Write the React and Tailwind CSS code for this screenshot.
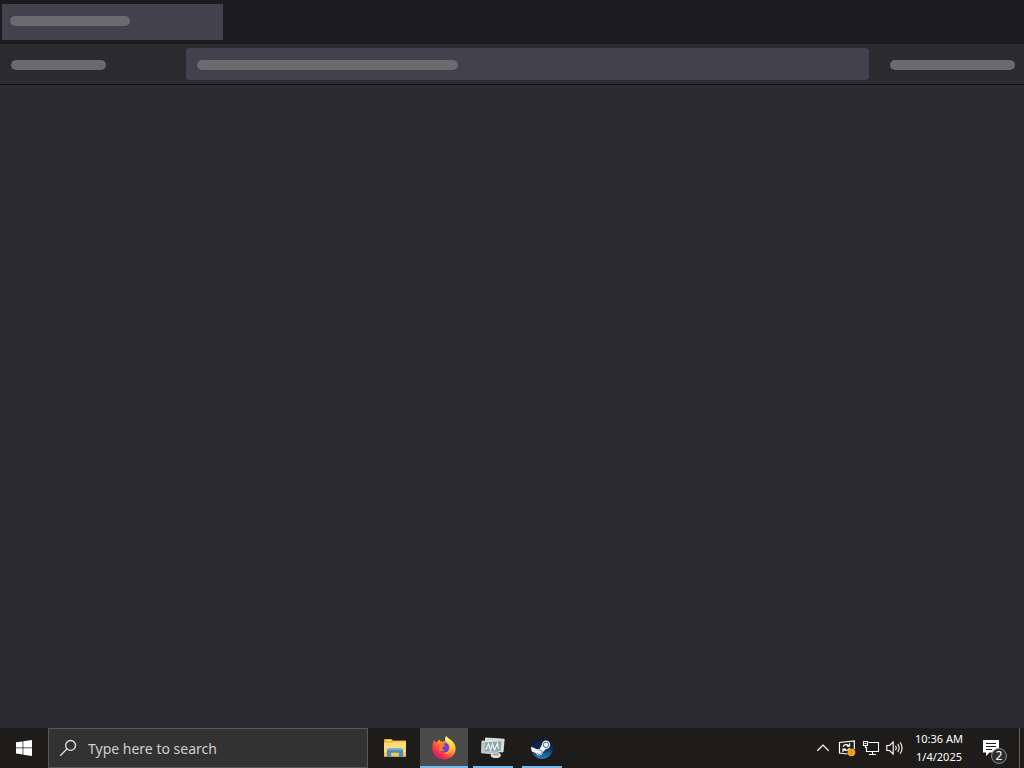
import React from "react";

function Skeleton({ className }) {
  return <div aria-hidden="true" className={`h-2.5 rounded-[5px] bg-[#6b6a6e] ${className}`} />;
}

function WindowsLogo() {
  return (
    <svg viewBox="0 0 16 16" className="size-4" fill="#fff" aria-hidden="true">
      <path d="M0 2.3 6.6 1.4V7.5H0ZM7.3 1.3 16 0V7.5H7.3ZM0 8.3H6.6V14.5L0 13.6ZM7.3 8.3H16V16L7.3 14.7Z" />
    </svg>
  );
}

function SearchIcon() {
  return (
    <svg viewBox="0 0 18 18" className="size-[18px] shrink-0" fill="none" stroke="#e6e6e6" strokeWidth="1.3" aria-hidden="true">
      <circle cx="11.6" cy="6.4" r="4.9" />
      <path d="M8 9.9 1.2 16.7" />
    </svg>
  );
}

function ExplorerIcon() {
  return (
    <svg viewBox="0 0 24 24" className="size-6" aria-hidden="true">
      <path d="M1 3.5Q1 3 1.5 3H8.5L10 4.5H22.5Q23 4.5 23 5V9H1Z" fill="#e5a624" />
      <path d="M3 4H8.5V5.2H3Z" fill="#fff0a8" />
      <path d="M1 6.5H9L10.5 5.5H23V20.5H1Z" fill="#fbdc78" />
      <path d="M1 16H23V20.5H1Z" fill="#f3ca55" />
      <path d="M4 20.8V14.4Q4 12.4 6 12.4H18Q20 12.4 20 14.4V20.8H15.8V16.8H8.2V20.8Z" fill="#4b8dba" />
      <path d="M5.5 12.4H18.5L20 14.2H4Z" fill="#70afd3" />
    </svg>
  );
}

function FirefoxIcon() {
  return (
    <svg viewBox="0 0 24 24" className="size-6" aria-hidden="true">
      <defs>
        <linearGradient id="fox" x1="20" y1="3" x2="5" y2="22" gradientUnits="userSpaceOnUse">
          <stop stopColor="#fff04d" />
          <stop offset=".3" stopColor="#ffb82e" />
          <stop offset=".55" stopColor="#ff6732" />
          <stop offset=".8" stopColor="#f52b50" />
          <stop offset="1" stopColor="#d01785" />
        </linearGradient>
        <linearGradient id="flame" x1="15" y1="0" x2="19" y2="20" gradientUnits="userSpaceOnUse">
          <stop stopColor="#fff585" />
          <stop offset=".5" stopColor="#ffd447" />
          <stop offset="1" stopColor="#ff7b30" />
        </linearGradient>
      </defs>
      <path d="M2.6 3.6C2.4 4.7 2.6 5.6 3 6.3L5.4 5.8C6 4.8 7 3.7 8.3 3.2C8 4.3 8.4 5.3 9.3 6C10.8 5 12.4 5 13.8 5.4C12.6 3.4 13 1.6 14.4.3C15 1.8 17 2.6 18.8 3.9C22 6.2 23.8 9.3 23.6 13C23.2 19 18.2 23.4 12 23.4C5.3 23.4.3 18.7.3 12.6C.3 9 .9 5.9 2.6 3.6Z" fill="url(#fox)" />
      <path d="M14.4.3C13 1.6 12.6 3.4 13.8 5.4C16.8 6.6 18.2 9 17.4 12.2C16.7 15.2 14.2 17 11.5 16.6C15 19.5 20.4 18 21.5 13.2C22.3 9.8 21 7.1 18.8 3.9C17 2.6 15 1.8 14.4.3Z" fill="url(#flame)" />
      <circle cx="12.2" cy="11.6" r="5" fill="#7541c8" />
      <path d="M7.6 8.6C9.2 6.3 11.8 5.8 14 7.2C12.6 7 11.8 7.6 11.7 8.4L13.3 9.1C13.1 10.5 10.6 10.5 10.1 11.9C9.7 13 11.2 14.2 12.8 13.8C10.8 16.6 6.4 15.1 6.5 11.4Z" fill="#ff7d32" />
    </svg>
  );
}

function MonitorsIcon() {
  return (
    <svg viewBox="0 0 24 24" className="size-6" aria-hidden="true">
      <path d="M4.5 2 23.2 3.2 22 16 4 15Z" fill="#d7dada" stroke="#f3f4f4" strokeWidth=".8" />
      <path d="M1 5 15.5 5.8 15 18 .6 16.8Z" fill="#bcc1c2" stroke="#eceeee" strokeWidth=".8" />
      <path d="M4.5 6.5 20.5 5.3 19.5 14.8 4 15Z" fill="#8aa5a7" />
      <path d="M5 14 7.5 8 9.5 14 11.5 8 13.5 14 16.5 7 17.5 13" fill="none" stroke="#e8f4f2" strokeWidth="1.2" />
      <path d="M11.5 15 17 14.7 18.4 17.6H13Z" fill="#a9b1b3" />
      <ellipse cx="14.8" cy="19.2" rx="5" ry="2.8" fill="#dfe1e2" />
      <ellipse cx="14.8" cy="18.4" rx="3.2" ry="1.2" fill="#9fa7a9" />
    </svg>
  );
}

function SteamIcon() {
  return (
    <svg viewBox="0 0 24 24" className="size-6" aria-hidden="true">
      <defs>
        <linearGradient id="steam" x1="12" y1="1" x2="12" y2="23" gradientUnits="userSpaceOnUse">
          <stop stopColor="#11162c" />
          <stop offset=".5" stopColor="#0b2c54" />
          <stop offset="1" stopColor="#2386ba" />
        </linearGradient>
      </defs>
      <path d="M1.4 10.4A10.8 10.8 0 1 1 2 16L7 18Z" fill="url(#steam)" />
      <path d="M1.1 10.8 7.5 13.4Q8.5 12.8 9.6 12.9L11.8 8.9A4.2 4.2 0 1 1 16 13L12.7 16.2A3.4 3.4 0 0 1 6.1 17.2L1.9 15.5Q1 13.1 1.1 10.8Z" fill="#f2f5f8" />
      <circle cx="16" cy="8.8" r="2.7" fill="none" stroke="#315a82" strokeWidth=".9" />
      <path d="M7.3 17.2A2.4 2.4 0 1 0 8.8 14" fill="none" stroke="#527799" strokeWidth=".9" />
    </svg>
  );
}

function ChevronIcon() {
  return (
    <svg viewBox="0 0 16 16" className="size-4" fill="none" stroke="#fff" strokeWidth="1.3" aria-hidden="true">
      <path d="M2.3 10.8 8 5.1 13.7 10.8" />
    </svg>
  );
}

function UpdateIcon() {
  return (
    <svg viewBox="0 0 18 18" className="size-[18px]" fill="none" stroke="#fff" strokeWidth="1.2" aria-hidden="true">
      <path d="M9.5 15 1.5 14V3.5L16.3 1.8V10" />
      <path d="M5.2 7.8C5.7 5.4 9 5 10.9 6.6M11.6 4.3V7.1H8.8M11.4 9C10.8 11.5 7.4 12 5.8 10.6M5 13V10.1H7.9" />
      <circle cx="13.4" cy="13.3" r="3.9" fill="#f5a51b" stroke="none" />
      <path d="M13.4 11.2V13.8M13.4 14.5V15.4" stroke="#b97711" strokeWidth=".9" />
    </svg>
  );
}

function NetworkIcon() {
  return (
    <svg viewBox="0 0 18 18" className="size-[18px]" fill="none" stroke="#fff" strokeWidth="1.1" aria-hidden="true">
      <path d="M6.5 3.5H16.5V12.5H4.5V8M10.5 12.5V15.5M7 15.5H14" />
      <path d="M1.5 2.5H5.5V6.5H1.5ZM3.5 6.5V8.5H4.5V12.5M2.5 4.5H4.5" />
    </svg>
  );
}

function VolumeIcon() {
  return (
    <svg viewBox="0 0 18 18" className="size-[18px]" fill="none" stroke="#fff" strokeWidth="1.1" aria-hidden="true">
      <path d="M.8 6.5H3.5L7.2 3V15L3.5 11.5H.8Z" />
      <path d="M9.5 6.8Q11 9 9.5 11.2M11.8 5Q14.5 9 11.8 13M14.1 3.3Q18 9 14.1 14.7" />
    </svg>
  );
}

function NotificationIcon() {
  return (
    <svg viewBox="0 0 16 16" className="size-4" aria-hidden="true">
      <path d="M0 0H16V12.5H6.5L3 16V12.5H0Z" fill="#fff" />
      <path d="M3 3.5H13M3 6.5H13M3 9.5H9" stroke="#1d1c1b" strokeWidth="1" />
    </svg>
  );
}

const apps = [
  { name: "File Explorer", Icon: ExplorerIcon, state: "idle" },
  { name: "Firefox", Icon: FirefoxIcon, state: "active" },
  { name: "Performance Monitor", Icon: MonitorsIcon, state: "open" },
  { name: "Steam", Icon: SteamIcon, state: "open" },
];

function AppButton({ name, Icon, state }) {
  return (
    <button
      type="button"
      aria-label={name}
      className={`flex w-12 flex-col items-center ${state === "active" ? "bg-[#4b4a4a]" : ""}`}
    >
      <span className="flex flex-1 items-center pt-0.5">
        <Icon />
      </span>
      {state === "idle" && <span className="h-0.5" />}
      {state === "active" && <span className="h-0.5 w-full bg-[#76b9ed]" />}
      {state === "open" && <span className="h-0.5 w-10 bg-[#76b9ed]" />}
    </button>
  );
}

function Taskbar() {
  return (
    <footer className="flex h-10 bg-[#1d1c1b] text-white">
      <button type="button" aria-label="Start" className="flex w-12 items-center justify-center">
        <WindowsLogo />
      </button>
      <label className="flex w-80 items-center gap-[11px] border border-[#585858] bg-[#323232] pl-2.5">
        <SearchIcon />
        <input
          type="text"
          aria-label="Type here to search"
          placeholder="Type here to search"
          className="min-w-0 flex-1 bg-transparent pt-0.5 font-['Noto_Sans',sans-serif] text-sm text-white outline-none placeholder:text-[#cfcfcf]"
        />
      </label>
      <nav aria-label="Apps" className="flex gap-px pl-[3px]">
        {apps.map((app) => (
          <AppButton key={app.name} {...app} />
        ))}
      </nav>
      <div className="ml-auto flex">
        <button type="button" aria-label="Show hidden icons" className="flex w-6 items-center justify-center">
          <ChevronIcon />
        </button>
        <button type="button" aria-label="Windows Update" className="flex w-6 items-center justify-center">
          <UpdateIcon />
        </button>
        <button type="button" aria-label="Network" className="flex w-6 items-center justify-center">
          <NetworkIcon />
        </button>
        <button type="button" aria-label="Volume" className="flex w-6 items-center justify-center">
          <VolumeIcon />
        </button>
        <button
          type="button"
          className="flex w-16 flex-col items-center justify-center font-['Noto_Sans',sans-serif] text-[11px] leading-[18px]"
        >
          <span>10:36 AM</span>
          <span>1/4/2025</span>
        </button>
        <button type="button" aria-label="2 notifications" className="flex w-12 items-center pl-3">
          <span className="relative">
            <NotificationIcon />
            <span className="absolute -right-2 -bottom-2 flex size-4 items-center justify-center rounded-full border border-[#8a8a8a] bg-[#2f2e2e] font-['Noto_Sans',sans-serif] text-xs">
              2
            </span>
          </span>
        </button>
        <button type="button" aria-label="Show desktop" className="w-[5px] border-l border-[#626160]" />
      </div>
    </footer>
  );
}

export default function App() {
  return (
    <div className="flex min-h-screen flex-col bg-[#2b2a30]">
      <header>
        <div className="flex h-11 items-start bg-[#1c1b20] px-0.5 pt-1">
          <div className="h-9 w-[221px] bg-[#42414c] px-2 py-3">
            <Skeleton className="w-[120px]" />
          </div>
        </div>
        <div className="flex h-[41px] items-start border-b border-[#151418] bg-[#2b2a2f] pt-1 pr-[9px] pl-[11px]">
          <div className="w-[175px] pt-3">
            <Skeleton className="w-[95px]" />
          </div>
          <div className="h-8 flex-1 rounded-[4px] bg-[#42414c] px-[11px] pt-3">
            <Skeleton className="w-[261px]" />
          </div>
          <div className="pt-3 pl-[21px]">
            <Skeleton className="w-[125px]" />
          </div>
        </div>
      </header>
      <main className="flex-1" />
      <Taskbar />
    </div>
  );
}
